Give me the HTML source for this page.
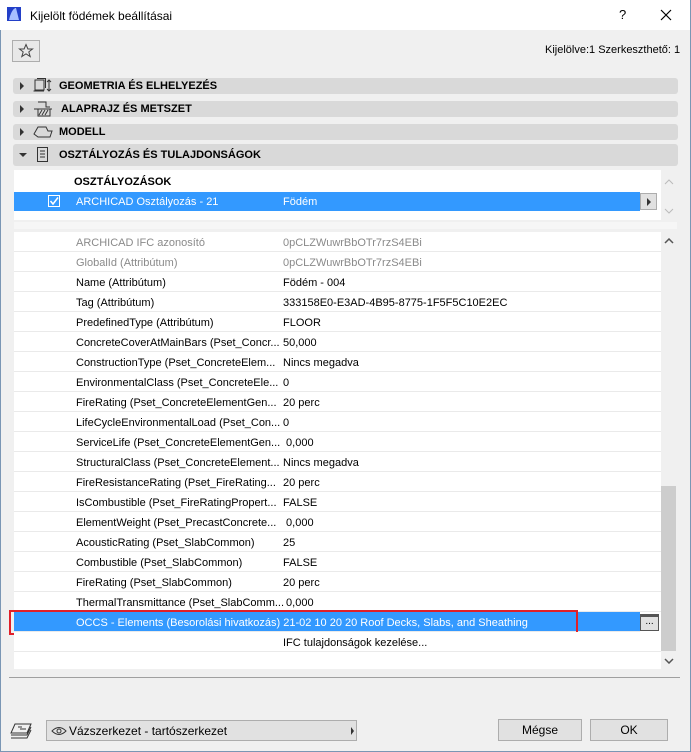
<!DOCTYPE html>
<html><head><meta charset="utf-8"><style>
*{margin:0;padding:0;box-sizing:border-box}
body{width:691px;height:752px;background:#f0f0f0;font-family:"Liberation Sans",sans-serif;font-size:11px;color:#000;position:relative;overflow:hidden}
.a{position:absolute}
.win{left:0;top:0;width:691px;height:752px;border:1px solid #7a96b4;border-top:none}
.title{left:0;top:0;width:690px;height:30px;background:#fff}
.bar{left:13px;width:665px;background:#d9d9d9;border-radius:3px}
.bar b{position:absolute;left:46px;font-size:11px}
.tri{position:absolute;left:7px;width:0;height:0;border-top:4px solid transparent;border-bottom:4px solid transparent;border-left:4px solid #333}
.row{position:absolute;left:14px;width:647px;height:20px;border-bottom:1px solid #eaeaea;background:#fff;line-height:22px}
.row .l{position:absolute;left:62px}
.row .v{position:absolute;left:269px}
.g{color:#8a8a8a}
.btn{background:#e1e1e1;border:1px solid #adadad;text-align:center;line-height:20px;font-size:12px}
</style></head><body>
<div class="a win"></div>
<div class="a title"></div>
<svg class="a" style="left:7px;top:7px" width="14" height="14"><rect width="14" height="14" fill="#2340c8"/><path d="M2 13 C4 4 7 1 9 1 L12 13 Z" fill="#a8c0ff"/></svg>
<div class="a" style="left:30px;top:9px;font-size:12px">Kijelölt födémek beállításai</div>
<div class="a" style="left:619px;top:7px;font-size:13px">?</div>
<svg class="a" style="left:660px;top:9px" width="12" height="12"><path d="M1 1L11 11M11 1L1 11" stroke="#000" stroke-width="1.2"/></svg>
<div class="a" style="left:12px;top:40px;width:28px;height:22px;border:1px solid #adadad;background:#e8e8e8"></div>
<svg class="a" style="left:18px;top:43px" width="16" height="16"><path d="M8 1.5L9.9 6H14.5L10.8 8.9L12.2 13.6L8 10.8L3.8 13.6L5.2 8.9L1.5 6H6.1Z" fill="none" stroke="#444" stroke-width="1"/></svg>
<div class="a" style="left:545px;top:44px;font-size:11px">Kijelölve:1 Szerkeszthető: 1</div>

<div class="a bar" style="top:78px;height:16px"><div class="tri" style="top:4px"></div><b style="top:2px">GEOMETRIA ÉS ELHELYEZÉS</b></div>
<div class="a bar" style="top:101px;height:16px"><div class="tri" style="top:4px"></div><b style="top:2px;left:48px">ALAPRAJZ ÉS METSZET</b></div>
<div class="a bar" style="top:124px;height:16px"><div class="tri" style="top:4px"></div><b style="top:2px">MODELL</b></div>
<div class="a bar" style="top:144px;height:22px"><div style="position:absolute;left:6px;top:9px;border-left:4px solid transparent;border-right:4px solid transparent;border-top:4px solid #333"></div><b style="top:5px">OSZTÁLYOZÁS ÉS TULAJDONSÁGOK</b></div>
<svg class="a" style="left:33px;top:78px" width="20" height="16"><rect x="2" y="2" width="9" height="10" fill="none" stroke="#333"/><path d="M4 0.5H12.5V10M0.5 13H11M16 2V13M14 4L16 2L18 4M14 11L16 13L18 11" fill="none" stroke="#333"/></svg>
<svg class="a" style="left:33px;top:101px" width="20" height="16"><path d="M5 1H13V6H17M1 8H19M5 8V15H17V8" fill="none" stroke="#333"/><path d="M6 14L9 9M9 14L12 9M12 14L15 9" stroke="#333"/></svg>
<svg class="a" style="left:33px;top:124px" width="20" height="16"><path d="M1 10L5 3H13L15 7H19L17 13H5Z" fill="none" stroke="#333"/></svg>
<svg class="a" style="left:37px;top:147px" width="12" height="16"><rect x="0.5" y="0.5" width="10" height="14" fill="none" stroke="#333"/><path d="M3 4H8M3 7H8M3 10H8" stroke="#333"/></svg>

<div class="a" style="left:14px;top:170px;width:647px;height:50px;background:#fff"></div>
<div class="a" style="left:74px;top:176px;font-weight:bold">OSZTÁLYOZÁSOK</div>
<div class="a" style="left:14px;top:192px;width:626px;height:19px;background:#3399ff;color:#fff;line-height:20px"><span style="position:absolute;left:62px">ARCHICAD Osztályozás - 21</span><span style="position:absolute;left:269px">Födém</span></div>
<div class="a" style="left:48px;top:195px;width:12px;height:12px;border:1px solid #fff"></div>
<svg class="a" style="left:49px;top:196px" width="10" height="10"><path d="M1.5 5L4 8L9 1.5" fill="none" stroke="#fff" stroke-width="1.5"/></svg>
<div class="a" style="left:640px;top:193px;width:17px;height:17px;background:#e1e1e1;border:1px solid #adadad"></div>
<div class="a" style="left:647px;top:198px;border-top:4px solid transparent;border-bottom:4px solid transparent;border-left:4px solid #333"></div>
<svg class="a" style="left:664px;top:179px" width="10" height="6"><path d="M1 5L5 1L9 5" fill="none" stroke="#bbb"/></svg>
<svg class="a" style="left:664px;top:208px" width="10" height="6"><path d="M1 1L5 5L9 1" fill="none" stroke="#bbb"/></svg>
<div class="a" style="left:14px;top:222px;width:663px;height:7px;background:#f6f6f6"></div>

<div class="a" style="left:14px;top:232px;width:647px;height:437px;background:#fff"></div>
<div class="row" style="top:232px"><span class="l g">ARCHICAD IFC azonosító</span><span class="v g">0pCLZWuwrBbOTr7rzS4EBi</span></div>
<div class="row" style="top:252px"><span class="l g">GlobalId (Attribútum)</span><span class="v g">0pCLZWuwrBbOTr7rzS4EBi</span></div>
<div class="row" style="top:272px"><span class="l">Name (Attribútum)</span><span class="v">Födém - 004</span></div>
<div class="row" style="top:292px"><span class="l">Tag (Attribútum)</span><span class="v">333158E0-E3AD-4B95-8775-1F5F5C10E2EC</span></div>
<div class="row" style="top:312px"><span class="l">PredefinedType (Attribútum)</span><span class="v">FLOOR</span></div>
<div class="row" style="top:332px"><span class="l">ConcreteCoverAtMainBars (Pset_Concr...</span><span class="v">50,000</span></div>
<div class="row" style="top:352px"><span class="l">ConstructionType (Pset_ConcreteElem...</span><span class="v">Nincs megadva</span></div>
<div class="row" style="top:372px"><span class="l">EnvironmentalClass (Pset_ConcreteEle...</span><span class="v">0</span></div>
<div class="row" style="top:392px"><span class="l">FireRating (Pset_ConcreteElementGen...</span><span class="v">20 perc</span></div>
<div class="row" style="top:412px"><span class="l">LifeCycleEnvironmentalLoad (Pset_Con...</span><span class="v">0</span></div>
<div class="row" style="top:432px"><span class="l">ServiceLife (Pset_ConcreteElementGen...</span><span class="v">&nbsp;0,000</span></div>
<div class="row" style="top:452px"><span class="l">StructuralClass (Pset_ConcreteElement...</span><span class="v">Nincs megadva</span></div>
<div class="row" style="top:472px"><span class="l">FireResistanceRating (Pset_FireRating...</span><span class="v">20 perc</span></div>
<div class="row" style="top:492px"><span class="l">IsCombustible (Pset_FireRatingPropert...</span><span class="v">FALSE</span></div>
<div class="row" style="top:512px"><span class="l">ElementWeight (Pset_PrecastConcrete...</span><span class="v">&nbsp;0,000</span></div>
<div class="row" style="top:532px"><span class="l">AcousticRating (Pset_SlabCommon)</span><span class="v">25</span></div>
<div class="row" style="top:552px"><span class="l">Combustible (Pset_SlabCommon)</span><span class="v">FALSE</span></div>
<div class="row" style="top:572px"><span class="l">FireRating (Pset_SlabCommon)</span><span class="v">20 perc</span></div>
<div class="row" style="top:592px"><span class="l">ThermalTransmittance (Pset_SlabComm...</span><span class="v">&nbsp;0,000</span></div>
<div class="row" style="top:612px;background:#3399ff;color:#fff;width:626px"><span class="l">OCCS - Elements (Besorolási hivatkozás) 21-02 10 20 20 Roof Decks, Slabs, and Sheathing</span></div>
<div class="a" style="left:9px;top:610px;width:569px;height:25px;border:2px solid #e0202a"></div>
<div class="a" style="left:640px;top:614px;width:19px;height:17px;background:#e1e1e1;border:1px solid #555;border-top:3px solid #555;font-size:10px;line-height:10px;text-align:center">...</div>
<div class="row" style="top:632px"><span class="l" style="left:269px">IFC tulajdonságok kezelése...</span></div>
<div class="a" style="left:661px;top:232px;width:16px;height:437px;background:#f0f0f0"></div>
<svg class="a" style="left:664px;top:238px" width="10" height="6"><path d="M1 5L5 1L9 5" fill="none" stroke="#555" stroke-width="1.5"/></svg>
<div class="a" style="left:661px;top:486px;width:15px;height:165px;background:#cdcdcd"></div>
<svg class="a" style="left:664px;top:658px" width="10" height="6"><path d="M1 1L5 5L9 1" fill="none" stroke="#555" stroke-width="1.5"/></svg>
<div class="a" style="left:9px;top:677px;width:671px;height:1px;background:#a0a0a0"></div>

<svg class="a" style="left:9px;top:723px" width="24" height="18"><path d="M6 1H22L18 10H2Z M2 12H18L22 4 M2 15H18L22 7" fill="none" stroke="#333"/><path d="M9 4H13M11 6H17" stroke="#333"/></svg>
<div class="a" style="left:46px;top:720px;width:311px;height:21px;background:#e1e1e1;border:1px solid #adadad"></div>
<svg class="a" style="left:51px;top:726px" width="16" height="10"><path d="M1 5Q8 -2 15 5Q8 12 1 5Z" fill="none" stroke="#333"/><circle cx="8" cy="5" r="2" fill="none" stroke="#333"/></svg>
<div class="a" style="left:69px;top:724px;font-size:12px">Vázszerkezet - tartószerkezet</div>
<div class="a" style="left:351px;top:727px;border-top:4px solid transparent;border-bottom:4px solid transparent;border-left:3px solid #333"></div>
<div class="a btn" style="left:498px;top:719px;width:84px;height:22px">Mégse</div>
<div class="a btn" style="left:590px;top:719px;width:78px;height:22px">OK</div>
</body></html>
